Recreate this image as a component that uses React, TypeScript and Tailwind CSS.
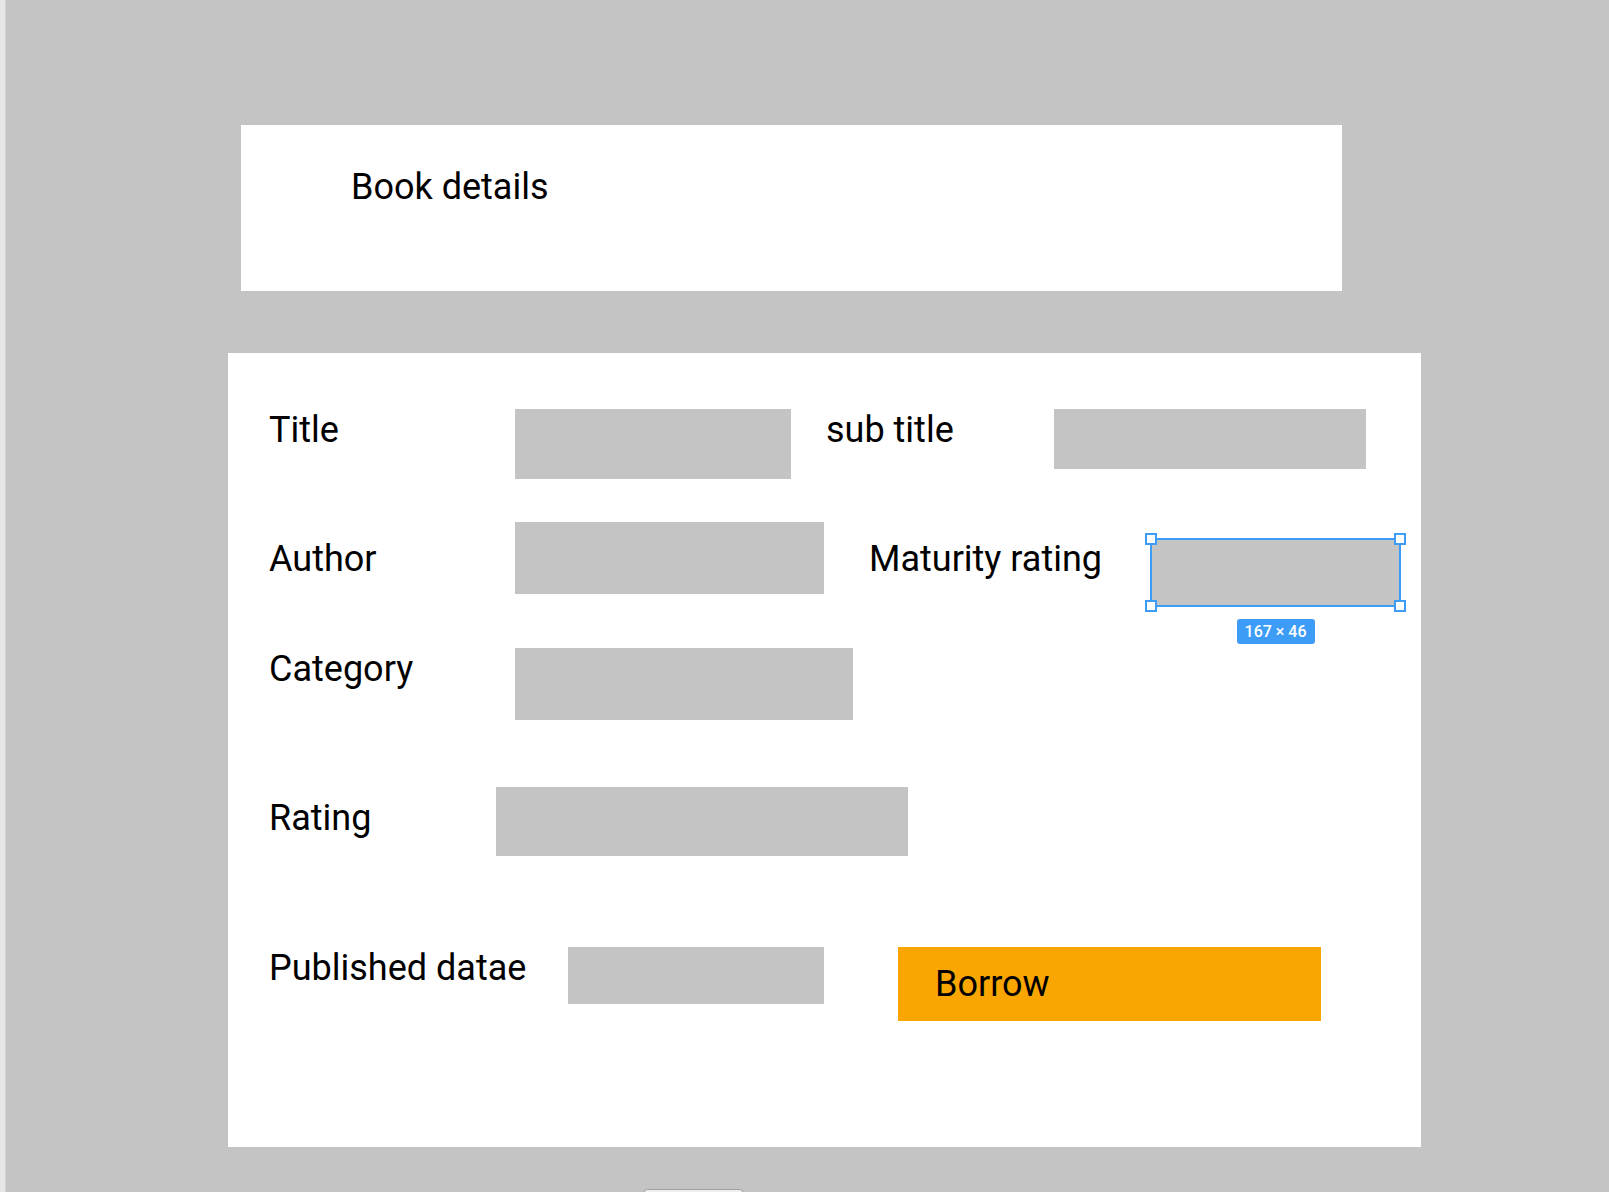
import React from "react";

const font = { fontFamily: "Roboto, 'Noto Sans', sans-serif" };

function Label({ children, w, mt = "" }: { children: React.ReactNode; w: string; mt?: string }) {
  return (
    <div className={`${w} ${mt} shrink-0 text-[36px] leading-[42px] text-black whitespace-nowrap`}>{children}</div>
  );
}

function Handle({ pos }: { pos: string }) {
  return (
    <div
      className={`absolute ${pos} w-[12px] h-[12px] bg-white border-2 border-[#3d9df6]`}
    />
  );
}

export default function App() {
  return (
    <div className="w-[1609px] h-[1192px] overflow-hidden flex bg-[#c4c4c4]" style={font}>
      <div className="w-[6px] shrink-0 bg-[#e6e6e6] border-r border-[#d2d2d2]" />
      <div className="flex flex-col">
        {/* Header card */}
        <div className="shrink-0 ml-[235px] mt-[125px] w-[1101px] h-[166px] bg-white pl-[110px] pt-[41px]">
          <div className="text-[36px] leading-[42px] text-black">Book details</div>
        </div>

        {/* Form card */}
        <div className="shrink-0 ml-[222px] mt-[62px] w-[1193px] h-[794px] bg-white pl-[41px] pt-[56px] flex flex-col">
          {/* Row 1 */}
          <div className="flex items-start">
            <Label w="w-[246px]">Title</Label>
            <div className="shrink-0 w-[276px] h-[70px] bg-[#c4c4c4]" />
            <Label w="w-[228px] ml-[35px]">sub title</Label>
            <div className="shrink-0 w-[312px] h-[60px] bg-[#c4c4c4]" />
          </div>

          {/* Row 2 */}
          <div className="flex items-start mt-[43px]">
            <Label w="w-[246px]" mt="mt-[16px]">Author</Label>
            <div className="shrink-0 w-[309px] h-[72px] bg-[#c4c4c4]" />
            <Label w="w-[281px] ml-[45px]" mt="mt-[16px]">Maturity rating</Label>
            <div className="shrink-0 relative mt-[16px] w-[251px] h-[69px] bg-[#c4c4c4] border-2 border-[#3d9df6]">
              <Handle pos="-left-[7px] -top-[7px]" />
              <Handle pos="-right-[7px] -top-[7px]" />
              <Handle pos="-left-[7px] -bottom-[7px]" />
              <Handle pos="-right-[7px] -bottom-[7px]" />
              <div className="absolute left-1/2 -translate-x-1/2 top-[79px] w-[78px] h-[25px] rounded-[3px] bg-[#3d9df6] text-white text-[16px] font-medium leading-[25px] text-center whitespace-nowrap">
                167 × 46
              </div>
            </div>
          </div>

          {/* Row 3 */}
          <div className="flex items-start mt-[41px]">
            <Label w="w-[246px]">Category</Label>
            <div className="shrink-0 w-[338px] h-[72px] bg-[#c4c4c4]" />
          </div>

          {/* Row 4 */}
          <div className="flex items-start mt-[67px]">
            <Label w="w-[227px]" mt="mt-[10px]">Rating</Label>
            <div className="shrink-0 w-[412px] h-[69px] bg-[#c4c4c4]" />
          </div>

          {/* Row 5 */}
          <div className="flex items-start mt-[91px]">
            <Label w="w-[299px]">Published datae</Label>
            <div className="shrink-0 w-[256px] h-[57px] bg-[#c4c4c4]" />
            <div className="shrink-0 ml-[74px] w-[423px] h-[74px] bg-[#f9a602] flex items-center pl-[37px]">
              <span className="text-[36px] leading-[42px] text-black">Borrow</span>
            </div>
          </div>
        </div>

        {/* Bottom tab */}
        <div className="shrink-0 ml-[637px] mt-[42px] w-[101px] h-[12px] rounded-t-[5px] border border-[#9f9f9f] bg-[#efefef]" />
      </div>
    </div>
  );
}
